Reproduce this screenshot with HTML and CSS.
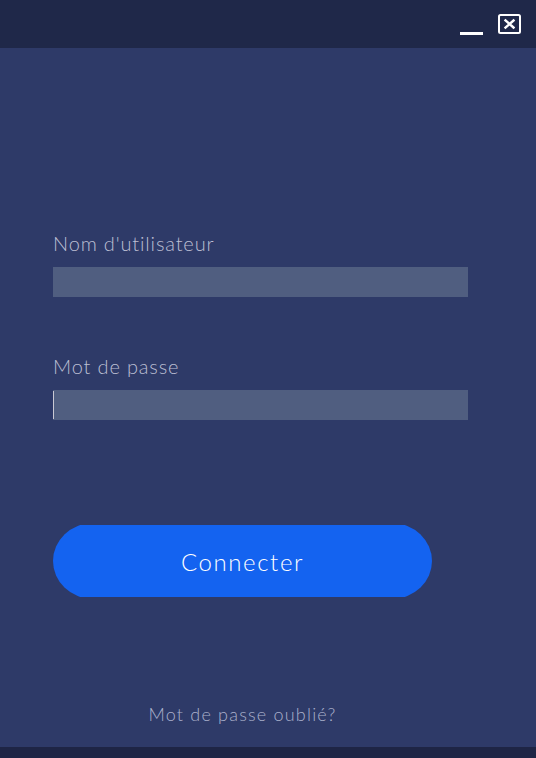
FILE: index.html
```html
<!DOCTYPE html>
<html lang="fr">
<head>
<meta charset="utf-8">
<title>Connexion</title>
<link rel="stylesheet" href="styles.css">
</head>
<body>
<div class="window">
  <header class="titlebar">
    <button class="win-btn minimize" aria-label="Réduire">
      <svg width="23" height="3" viewBox="0 0 23 3"><rect x="0" y="0" width="23" height="3" fill="#fff"/></svg>
    </button>
    <button class="win-btn close" aria-label="Fermer">
      <svg width="23" height="20" viewBox="0 0 23 20">
        <rect x="1" y="1" width="21" height="18" rx="1.5" fill="none" stroke="#fff" stroke-width="2"/>
        <path d="M7.5 6.5 L15.5 13.5 M15.5 6.5 L7.5 13.5" stroke="#fff" stroke-width="2.4" stroke-linecap="square"/>
      </svg>
    </button>
  </header>
  <main class="content">
    <form class="login">
      <label class="field">
        <span class="label">Nom d'utilisateur</span>
        <span class="input"></span>
      </label>
      <label class="field">
        <span class="label">Mot de passe</span>
        <span class="input focused"><span class="caret"></span></span>
      </label>
      <div class="btn-wrap">
        <button type="button" class="connect">Connecter</button>
      </div>
      <a class="forgot">Mot de passe oublié?</a>
    </form>
  </main>
  <footer class="bottombar"></footer>
</div>
</body>
</html>
```

FILE: styles.css
```css
* { box-sizing: border-box; }
html, body { margin: 0; padding: 0; }
body {
  width: 536px;
  height: 758px;
  background: #2e3a68;
  font-family: "Lato", "Open Sans", sans-serif;
  font-weight: 300;
  overflow: hidden;
}
.window {
  display: flex;
  flex-direction: column;
  height: 758px;
}
.titlebar {
  height: 48px;
  background: #1f2849;
  display: flex;
  justify-content: flex-end;
  align-items: flex-start;
  padding: 14px 15px 0 0;
  gap: 15px;
  flex: none;
}
.win-btn {
  background: none;
  border: 0;
  padding: 0;
  margin: 0;
  display: block;
  line-height: 0;
}
.win-btn.minimize { margin-top: 17px; }
.content {
  flex: 1;
  padding: 0 0 0 53px;
}
.login {
  display: flex;
  flex-direction: column;
  width: 415px;
  padding-top: 183px;
}
.field {
  display: flex;
  flex-direction: column;
  gap: 12px;
  margin-bottom: 57px;
}
.label {
  color: #bcbfd3;
  font-size: 20px;
  line-height: 24px;
  letter-spacing: 0.85px;
}
.input {
  display: block;
  height: 30px;
  background: #505e80;
  position: relative;
}
.caret {
  position: absolute;
  left: 0;
  top: 1px;
  bottom: 1px;
  width: 1px;
  background: #c9c9d3;
}
.btn-wrap {
  margin-top: 48px;
  width: 379px;
}
.connect {
  display: block;
  width: 379px;
  height: 76px;
  margin: -2px 0;
  border: 0;
  background: #1463f0;
  color: #ffffff;
  font-family: inherit;
  font-weight: 300;
  font-size: 24px;
  letter-spacing: 1.6px;
  border-radius: 40px / 38px;
  clip-path: inset(2px 0);
}
.forgot {
  display: block;
  width: 379px;
  text-align: center;
  margin-top: 106px;
  color: #aab0cb;
  font-size: 18px;
  line-height: 22px;
  letter-spacing: 1.2px;
}
.bottombar {
  height: 11px;
  background: #1e2545;
  flex: none;
}
```
